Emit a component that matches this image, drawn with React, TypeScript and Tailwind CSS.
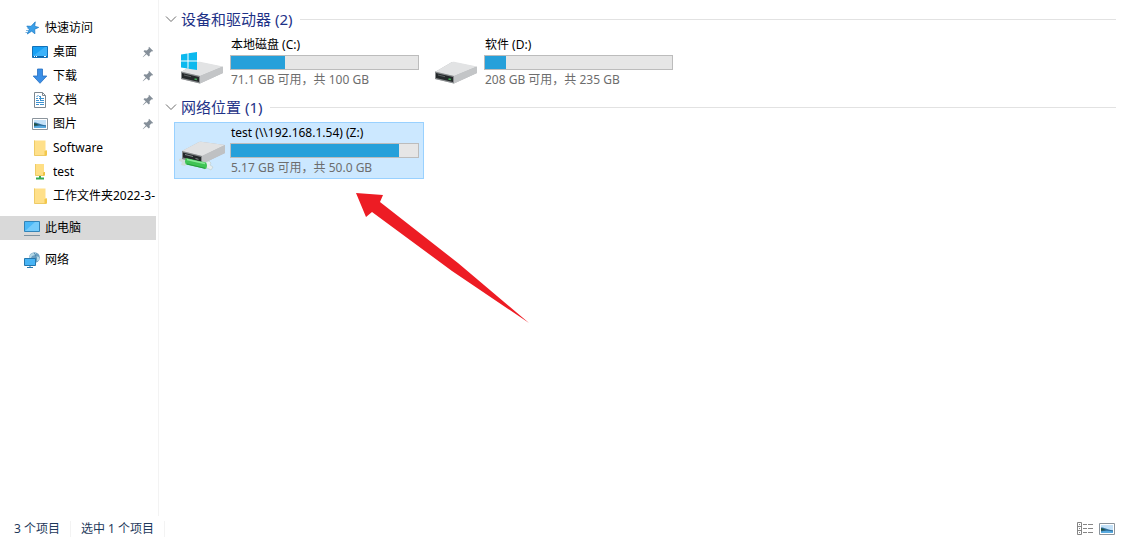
import React from "react";

const PinIcon = () => (
  <svg className="w-3 h-3 shrink-0" viewBox="0 0 12 12" fill="#858f99">
    <path d="M7 .8 11.2 5 10 5.5 9.6 5.2 7.6 7.2 7.8 9.6 6.8 10.5 4.5 8.2 1 11.3.7 11 3.8 7.5 1.5 5.2 2.4 4.3 4.8 4.5 6.8 2.5 6.5 2Z" />
  </svg>
);

const StarIcon = () => (
  <svg className="w-4 h-4 shrink-0" viewBox="0 0 16 16">
    <path
      d="m11.300 1.800-.6 4.400 4 1.200-4 1.800.2 4.600-3.200-2.600-4.400 2.800 1.900-4.700-2.400-3.200 4.200.2Z"
      fill="#3a9fe8"
      stroke="#1878c4"
      strokeWidth=".7"
    />
    <path d="M2 10.500h3M1.500 12.500h2.500M3.500 8.500h2" stroke="#5b9fd6" strokeWidth=".8" />
  </svg>
);

const DesktopIcon = () => (
  <svg className="w-4 h-4 shrink-0" viewBox="0 0 16 16">
    <path d="M.5 2.5h15v11H.5z" fill="#17a0f4" stroke="#1271b8" />
    <path d="m1 12 12-9h2v9z" fill="#3bb2fa" />
    <path d="M1 12.5h14" stroke="#0c66ad" />
    <path d="M2 12.5h1M4 12.5h1M12 12.5h2" stroke="#fff" />
  </svg>
);

const DownloadIcon = () => (
  <svg className="w-4 h-4 shrink-0" viewBox="0 0 16 16">
    <path d="M5.5 1h5v7h4.3L8 15.3 1.2 8h4.3Z" fill="#3a8ee6" stroke="#2770c0" strokeWidth=".8" />
  </svg>
);

const DocumentIcon = () => (
  <svg className="w-4 h-4 shrink-0" viewBox="0 0 16 16">
    <path d="M2.5.5h8l3 3v12h-11z" fill="#fff" stroke="#7c8790" />
    <path d="M10.5.5v3h3" fill="none" stroke="#7c8790" />
    <path
      d="M7 4.5h2M4 6.5h2M7 6.5h5M4 8.5h3M8 8.5h4M4 10.5h8M4 12.5h3M8 12.5h4"
      stroke="#3d91cf"
    />
    <path d="m4.500 5 2-2M8.500 5v4" stroke="#3d91cf" />
  </svg>
);

const PictureIcon = () => (
  <svg className="w-4 h-4 shrink-0" viewBox="0 0 16 16">
    <path d="M.5 2.5h15v11H.5z" fill="#fff" stroke="#8b949c" />
    <path d="M2 4h12v8H2z" fill="#c3e1f8" />
    <path d="M2 6.500c4 0 5 2 12 2.700V11H2z" fill="#2f6f9e" />
    <path d="M2 10.500c4-1 8-.8 12 0V12H2z" fill="#5aabe0" />
    <path d="M2 7.200c2 .2 3 1 5 1.800l-5 .8z" fill="#23533f" />
  </svg>
);

const FolderIcon = () => (
  <svg className="w-4 h-4 shrink-0" viewBox="0 0 16 16">
    <path d="M2 .5h11.500v10H15v5H2z" fill="#ffe08a" />
    <path d="M2.500.5v15H14" fill="none" stroke="#eecb66" />
    <path d="M12.500 15.500v-4l1-1H15v5z" fill="#f3c84b" />
  </svg>
);

const NetworkFolderIcon = () => (
  <svg className="w-4 h-4 shrink-0" viewBox="0 0 16 16">
    <path d="M3 0h9v8h1v3.500H3z" fill="#ffdf85" />
    <path d="M3.500 0v11.500H12" fill="none" stroke="#eecb66" />
    <path d="M11 11.500V8.700l1-.7h1v3.500z" fill="#efc243" />
    <path d="M7 12h2v1.500h3v2H4v-2h3z" fill="#35a853" />
  </svg>
);

const ComputerIcon = () => (
  <svg className="w-4 h-4 shrink-0" viewBox="0 0 16 16">
    <path d="M.5 1.500h15v10H.5z" fill="#4bb8f7" stroke="#3384b8" />
    <path d="m1 11 10-9h4v9z" fill="#74cbfb" />
    <path d="M0 15.500h16" stroke="#7f929f" />
  </svg>
);

const NetworkIcon = () => (
  <svg className="w-4 h-4 shrink-0" viewBox="0 0 16 16">
    <circle cx="10.500" cy="5.500" r="5.300" fill="#6c9fc0" />
    <path d="M6 3c2-2 4-2.500 6-2l-1 2-3 1-1 2H5zM12 4l3 1v3l-3 2z" fill="#b5d8e6" />
    <path d="M10 1c2 2 3 5 2 9" fill="none" stroke="#4d89ae" />
    <path d="M.5 6.500h11v7H.5z" fill="#47b4f5" stroke="#2577ad" />
    <path d="M6 14v1M3 15.500h6" stroke="#2577ad" />
  </svg>
);

const DriveBody = () => (
  <>
    <path d="m1 23 17-10 25 5v6L20 34.500 1 30Z" fill="#b9bbbd" />
    <path d="m1 23 17-10q1-.5 2-.3L43 17.500 20 27Z" fill="#e2e3e4" />
    <path d="m20 27 23-9.500V24L20 34.500Z" fill="#c3c5c7" />
    <path d="m1 22.500 19 4.500v7.500L1 30Z" fill="#898c8e" />
    <path d="m2 24 17 4v5L2 29Z" fill="#24282a" />
    <path d="m4 26 7 1.700" stroke="#5b6062" />
    <path d="m14.500 30 2.500.6" stroke="#3fae55" strokeWidth="1.500" />
  </>
);

const DriveIcon = () => (
  <svg className="mt-2 w-12 h-10 shrink-0" viewBox="-2 -2 48 40">
    <DriveBody />
  </svg>
);

const SystemDriveIcon = () => (
  <svg className="mt-2 w-12 h-10 shrink-0" viewBox="-2 -2 48 40">
    <DriveBody />
    <path
      d="M1 5.500 7.500 4.500v7H1zM8.500 4.300 17 3v8.500H8.500zM1 12.500h6.500v7L1 18.500zM8.500 12.500H17V21l-8.500-1.300z"
      fill="#0cb9ee"
    />
  </svg>
);

const NetworkDriveIcon = () => (
  <svg className="mt-2 w-12 h-10 shrink-0" viewBox="0 0 48 40">
    <path d="m1 24 7-2 2 6-3 3-4-1 1-3-3-1z" fill="#cfdcdc" />
    <path d="m4 16 17-9q1-.5 2-.3L47 10v8L24 29 4 24Z" fill="#b9bbbd" />
    <path d="m4 16 17-9q1-.5 2-.3L47 10 24 21Z" fill="#e1e2e3" />
    <path d="m24 21 23-11v8L24 29Z" fill="#bfc1c3" />
    <path d="m4 16 20 5v8L4 24Z" fill="#85888a" />
    <path d="m5 17.500 18 4.500v5L5 22.500Z" fill="#24282a" />
    <path d="m7 19.500 8 2M17.500 23.500l3 .8" stroke="#858b8e" />
    <path d="m26 28 5-2 2 2-1 2 3 2-2 3-4-2-3 1z" fill="#e7eeee" stroke="#b4c4c6" strokeWidth=".5" />
    <path d="m8 23 20 4.500q2 3 0 6.500L8 29.500q-2-3 0-6.500Z" fill="#3fc455" />
    <path d="m9 24.500 18 4" stroke="#8be899" strokeWidth="1.500" />
    <path d="m9 29 18 4.300" stroke="#269d3b" />
  </svg>
);

const DetailsIcon = () => (
  <svg className="w-4 h-4" viewBox="0 0 16 16" fill="none" stroke="#858585">
    <path d="M.5 1.500h4v12h-4zM.5 5.500h4M.5 9.500h4M2 3.500h1M2 7.500h1M2 11.500h1" />
    <path d="M6 3.500h4M11 3.500h5M6 7.500h4M11 7.500h5M6 11.500h4M11 11.500h5" />
  </svg>
);

const quickAccess = [
  { name: "桌面", icon: <DesktopIcon />, pinned: true },
  { name: "下载", icon: <DownloadIcon />, pinned: true },
  { name: "文档", icon: <DocumentIcon />, pinned: true },
  { name: "图片", icon: <PictureIcon />, pinned: true },
  { name: "Software", icon: <FolderIcon />, pinned: false },
  { name: "test", icon: <NetworkFolderIcon />, pinned: false },
  { name: "工作文件夹2022-3-", icon: <FolderIcon />, pinned: false },
];

interface RootLinkProps {
  name: string;
  icon: React.ReactNode;
  active?: boolean;
}

const RootLink = ({ name, icon, active }: RootLinkProps) => (
  <a
    href="#"
    className={`flex h-6 items-center gap-[5px] pl-6 ${active ? "bg-[#d9d9d9]" : ""}`}
  >
    {icon}
    <span>{name}</span>
  </a>
);

interface DriveTileProps {
  name: string;
  info: string;
  used: number;
  icon: React.ReactNode;
  selected?: boolean;
}

const DriveTile = ({ name, info, used, icon, selected }: DriveTileProps) => (
  <button
    type="button"
    className={`flex h-[57px] w-[250px] items-center gap-1 border pl-[3px] pr-1 text-left ${
      selected ? "border-[#99d1ff] bg-[#cce8ff]" : "border-transparent"
    }`}
  >
    {icon}
    <span className="flex flex-1 flex-col">
      <span className="pl-px leading-5">{name}</span>
      <span
        role="progressbar"
        aria-label={name}
        aria-valuenow={used}
        className="block h-[15px] border border-[#bcbcbc] bg-[#e6e6e6]"
      >
        <span className="block h-full bg-[#26a0da]" style={{ width: `${used}%` }} />
      </span>
      <span className="pl-px leading-5 text-[#6d6d6d]">{info}</span>
    </span>
  </button>
);

interface GroupProps {
  title: string;
  children: React.ReactNode;
}

const Group = ({ title, children }: GroupProps) => (
  <section className="mb-[5px]">
    <h2 className="mb-1 flex h-[22px] items-center gap-2 text-[15px] text-[#1e3287]">
      <button type="button" className="flex items-center gap-1">
        <svg className="w-3 h-3" viewBox="0 0 12 12" fill="none" stroke="#6d6d6d">
          <path d="m1 3.500 5 5 5-5" />
        </svg>
        {title}
      </button>
      <span className="h-px flex-1 bg-[#e2e2e2]" />
    </h2>
    <div className="flex flex-wrap gap-1 pl-[9px]">{children}</div>
  </section>
);

const App = () => {
  return (
    <div className="flex min-h-screen flex-col bg-white font-['Noto_Sans','Noto_Sans_CJK_SC',sans-serif] text-xs text-black">
      <div className="flex flex-1">
        <nav className="w-[159px] shrink-0 border-r border-[#f3f3f3] pr-[2px] pt-4">
          <RootLink name="快速访问" icon={<StarIcon />} />
          <ul className="mb-2">
            {quickAccess.map((item) => (
              <li key={item.name}>
                <a
                  href="#"
                  className={`flex h-6 items-center gap-[5px] pl-8 ${item.pinned ? "pr-[2px]" : ""}`}
                >
                  {item.icon}
                  <span className="min-w-0 flex-1 overflow-hidden whitespace-nowrap">
                    {item.name}
                  </span>
                  {item.pinned && <PinIcon />}
                </a>
              </li>
            ))}
          </ul>
          <div className="flex flex-col gap-2">
            <RootLink name="此电脑" icon={<ComputerIcon />} active />
            <RootLink name="网络" icon={<NetworkIcon />} />
          </div>
        </nav>

        <main className="flex-1 pl-[6px] pr-[7px] pt-2">
          <Group title="设备和驱动器 (2)">
            <DriveTile
              name="本地磁盘 (C:)"
              info="71.1 GB 可用，共 100 GB"
              used={29}
              icon={<SystemDriveIcon />}
            />
            <DriveTile
              name="软件 (D:)"
              info="208 GB 可用，共 235 GB"
              used={11}
              icon={<DriveIcon />}
            />
          </Group>
          <Group title="网络位置 (1)">
            <div className="relative">
              <DriveTile
                name="test (\\192.168.1.54) (Z:)"
                info="5.17 GB 可用，共 50.0 GB"
                used={90}
                icon={<NetworkDriveIcon />}
                selected
              />
              <svg
                className="pointer-events-none absolute left-[181px] top-[70px] h-[132px] w-[174px]"
                viewBox="0 0 174 132"
              >
                <path d="m1 1 27 2-3 7 78 61 71 60-77-52L17 20l-6 5Z" fill="#ed1c24" />
              </svg>
            </div>
          </Group>
        </main>
      </div>

      <footer className="flex h-6 items-center pl-[14px] pr-2 pt-px text-[#1e395b]">
        <span className="border-r border-[#f3f3f3] pr-[10px]">3 个项目</span>
        <span className="border-r border-[#f3f3f3] px-[10px]">选中 1 个项目</span>
        <div className="ml-auto flex gap-[6px]">
          <button type="button" aria-label="详细信息">
            <DetailsIcon />
          </button>
          <button type="button" aria-label="大图标">
            <PictureIcon />
          </button>
        </div>
      </footer>
    </div>
  );
};

export default App;
